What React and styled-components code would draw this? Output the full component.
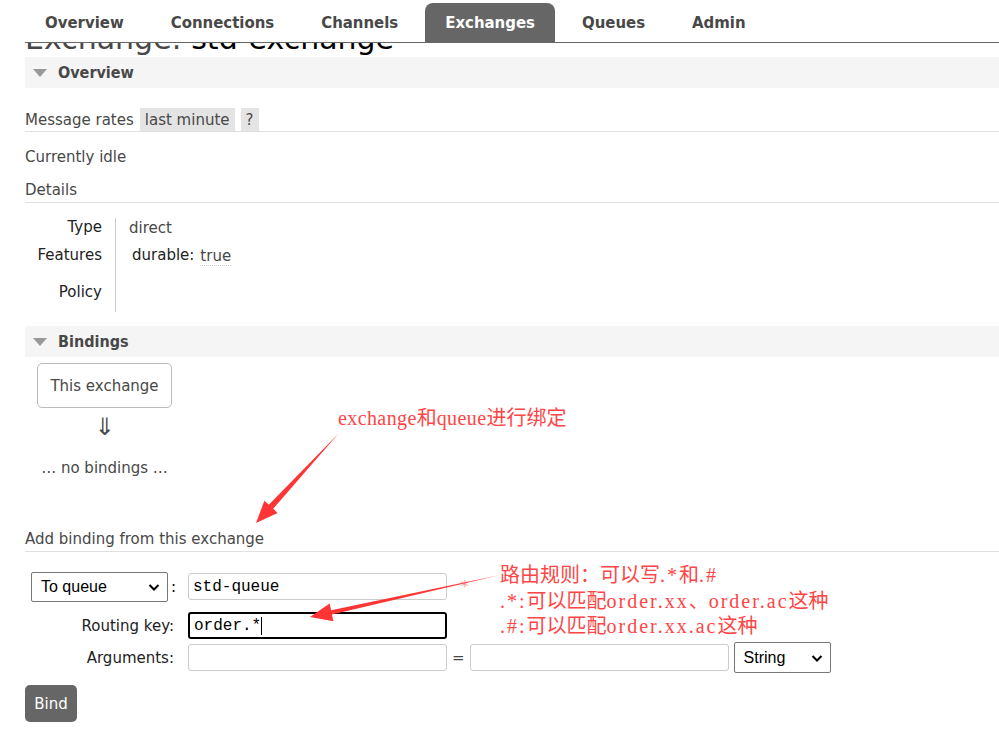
import React from 'react'
import styled, { createGlobalStyle } from 'styled-components'

const TEXT = '#484848'
const RED = '#ff4545'
const SECTION_BG = '#f5f5f5'

const GlobalStyle = createGlobalStyle`
  html, body {
    margin: 0;
    padding: 0;
    background: #fff;
    overflow: hidden;
  }
  body {
    font-family: "DejaVu Sans", Verdana, sans-serif;
    font-size: 15px;
    color: ${TEXT};
  }
`

const Page = styled.div`
  position: relative;
  width: 999px;
  height: 729px;
  overflow: hidden;
`

const Header = styled.header`
  background: #fff;
`

const Tabs = styled.ul`
  list-style: none;
  margin: 0 0 0 25px;
  padding: 3px 0 0;
  height: 39px;
  box-sizing: content-box;
  display: flex;
  gap: 7px;
  border-bottom: 1px solid #666;
`

const Tab = styled.li`
  padding: 0 20px;
  display: flex;
  align-items: center;
  border-radius: 8px 8px 0 0;
  font-family: "DejaVu Sans Condensed", "DejaVu Sans", sans-serif;
  font-weight: bold;
  font-size: 16.6px;
  color: ${(p) => (p.active ? '#fff' : TEXT)};
  background: ${(p) => (p.active ? '#666' : 'transparent')};
`

const Main = styled.main`
  padding-left: 25px;
`

/* the page is scrolled: only the lower part of the title shows below the header */
const TitleClip = styled.div`
  height: 14px;
  overflow: hidden;
`

const Title = styled.h1`
  margin: -23px 0 0;
  font-size: 30px;
  font-weight: normal;
  line-height: 37px;
  color: ${TEXT};
  white-space: nowrap;
  b {
    font-weight: normal;
    color: #000;
  }
`

const SectionHead = styled.h2`
  margin: ${(p) => p.top || 0}px 0 0;
  height: 31px;
  background: ${SECTION_BG};
  display: flex;
  align-items: center;
  gap: 11px;
  padding-left: 8px;
  font-family: "DejaVu Sans Condensed", "DejaVu Sans", sans-serif;
  font-weight: bold;
  font-size: 16px;
  color: ${TEXT};
`

const Triangle = styled.span`
  width: 0;
  height: 0;
  border-left: 7px solid transparent;
  border-right: 7px solid transparent;
  border-top: 8px solid #999;
`

const RatesRow = styled.div`
  margin-top: 20px;
  height: 23px;
  display: flex;
  align-items: center;
  gap: 6px;
  border-bottom: 1px solid #e0e0e0;
`

const Chip = styled.span`
  background: #e4e4e4;
  padding: 0 5px;
  height: 23px;
  line-height: 25px;
`

const Line = styled.div`
  margin-top: ${(p) => p.top}px;
  line-height: 18px;
`

const SubHead = styled.div`
  margin-top: ${(p) => p.top}px;
  padding-bottom: 3px;
  line-height: 18px;
  border-bottom: 1px solid #e0e0e0;
`

const Details = styled.div`
  margin-top: 15px;
  display: grid;
  grid-template-columns: 90px 1fr;
  grid-template-rows: 20px 34px 40px;
`

const Label = styled.div`
  display: flex;
  align-items: center;
  justify-content: flex-end;
  padding-right: 13px;
  color: #222;
  margin-top: ${(p) => p.shift || 0}px;
`

const Value = styled.div`
  display: flex;
  align-items: center;
  padding-left: 13px;
  border-left: 1px solid #ccc;
  gap: 6px;
`

const Key = styled.span`
  color: #222;
  margin-left: 3px;
`

const Dotted = styled.span`
  margin-top: 3px;
  border-bottom: 1px dotted #ccc;
  line-height: 17px;
`

const BindingBox = styled.div`
  margin: 6px 0 0 12px;
  width: 133px;
  height: 43px;
  border: 1px solid #bbb;
  border-radius: 5px;
  display: flex;
  align-items: center;
  justify-content: center;
`

const Centered = styled.div`
  margin-left: 12px;
  width: 135px;
  text-align: center;
  margin-top: ${(p) => p.top}px;
  font-size: ${(p) => p.size || 15}px;
  line-height: ${(p) => p.lh || 18}px;
`

const Form = styled.div`
  margin-top: 18px;
`

const FormRow = styled.div`
  display: flex;
  align-items: center;
  height: 33px;
  margin-top: ${(p) => p.top || 0}px;
`

const FieldLabel = styled.div`
  width: 149px;
  flex: none;
  display: flex;
  align-items: center;
  justify-content: ${(p) => (p.start ? 'flex-start' : 'flex-end')};
  color: #222;
  margin-right: 14px;
`

const Select = styled.div`
  flex: none;
  width: ${(p) => p.w}px;
  height: ${(p) => p.h}px;
  box-sizing: border-box;
  border: 1px solid #767676;
  border-radius: 2px;
  display: flex;
  align-items: center;
  justify-content: space-between;
  padding: 0 6px 0 9px;
  font-family: "Liberation Sans", Arial, sans-serif;
  font-size: 16px;
  color: #000;
  margin-left: ${(p) => p.left || 0}px;
`

const Field = styled.div`
  position: relative;
  flex: none;
`

const Input = styled.input`
  display: block;
  width: 259px;
  height: 27px;
  box-sizing: border-box;
  border: ${(p) => (p.focused ? '2px solid #000' : '1px solid #ccc')};
  border-radius: 3px;
  padding: 0 4px;
  font-family: "Liberation Mono", "Courier New", monospace;
  font-size: 16px;
  color: #000;
  outline: none;
  background: #fff;
`

const Caret = styled.span`
  position: absolute;
  left: 73px;
  top: 5px;
  width: 1px;
  height: 18px;
  background: #000;
`

const Sep = styled.span`
  margin: 0 ${(p) => p.space}px;
  color: ${(p) => p.color || TEXT};
`

const Button = styled.button`
  margin-top: 11px;
  width: 52px;
  height: 37px;
  border: none;
  border-radius: 5px;
  background: #666;
  color: #fff;
  font-family: "DejaVu Sans", sans-serif;
  font-size: 15px;
  padding: 0;
`

const Note = styled.div`
  position: absolute;
  left: ${(p) => p.x}px;
  top: ${(p) => p.y}px;
  color: ${RED};
  font-family: "Noto Sans CJK SC", sans-serif;
  font-size: 20px;
  line-height: 24.5px;
  white-space: nowrap;
  z-index: 3;
`

const Latin = styled.span`
  font-family: "Liberation Serif", "Times New Roman", serif;
  letter-spacing: ${(p) => p.ls ?? 2}px;
`

const Arrows = styled.svg`
  position: absolute;
  left: 0;
  top: 0;
  z-index: 3;
  pointer-events: none;
`

const Chevron = () => (
  <svg width="14" height="14" viewBox="0 0 14 14">
    <path d="M2.5 5 L7 9.5 L11.5 5" fill="none" stroke="#000" strokeWidth="2" />
  </svg>
)

export default function App() {
  const tabs = ['Overview', 'Connections', 'Channels', 'Exchanges', 'Queues', 'Admin']
  return (
    <Page>
      <GlobalStyle />
      <Header>
        <Tabs>
          {tabs.map((t) => (
            <Tab key={t} active={t === 'Exchanges'}>{t}</Tab>
          ))}
        </Tabs>
      </Header>
      <Main>
        <TitleClip>
          <Title>Exchange: <b>std-exchange</b></Title>
        </TitleClip>
        <SectionHead><Triangle />Overview</SectionHead>
        <RatesRow>
          <span>Message rates</span>
          <Chip>last minute</Chip>
          <Chip>?</Chip>
        </RatesRow>
        <Line top={16}>Currently idle</Line>
        <SubHead top={15}>Details</SubHead>
        <Details>
          <Label shift={-2}>Type</Label>
          <Value>direct</Value>
          <Label>Features</Label>
          <Value><Key>durable:</Key><Dotted>true</Dotted></Value>
          <Label>Policy</Label>
          <Value />
        </Details>
        <SectionHead top={14}><Triangle />Bindings</SectionHead>
        <BindingBox>This exchange</BindingBox>
        <Centered top={7} size={24} lh={24}>⇓</Centered>
        <Centered top={20}>… no bindings …</Centered>
        <SubHead top={53}>Add binding from this exchange</SubHead>
        <Form>
          <FormRow>
            <FieldLabel start>
              <Select w={137} h={30} left={6}>To queue<Chevron /></Select>
              <Sep space={3} color="#000">:</Sep>
            </FieldLabel>
            <Field><Input readOnly defaultValue="std-queue" /></Field>
            <Sep space={14} color="#f99">*</Sep>
          </FormRow>
          <FormRow top={6}>
            <FieldLabel>Routing key:</FieldLabel>
            <Field>
              <Input readOnly focused defaultValue="order.*" />
              <Caret />
            </Field>
          </FormRow>
          <FormRow top={-1}>
            <FieldLabel>Arguments:</FieldLabel>
            <Field><Input readOnly /></Field>
            <Sep space={5}>=</Sep>
            <Field><Input readOnly /></Field>
            <Select w={97} h={31} left={5}>String<Chevron /></Select>
          </FormRow>
          <Button>Bind</Button>
        </Form>
      </Main>

      <Note x={338} y={405}>
        <Latin ls={0.4}>exchange</Latin>和<Latin ls={0.4}>queue</Latin>进行绑定
      </Note>
      <Note x={500} y={562}>
        <div>路由规则：可以写<Latin>.*</Latin>和<Latin>.#</Latin></div>
        <div><Latin>.*:</Latin>可以匹配<Latin>order.xx</Latin>、<Latin>order.ac</Latin>这种</div>
        <div><Latin>.#:</Latin>可以匹配<Latin>order.xx.ac</Latin>这种</div>
      </Note>
      <Arrows width="999" height="729" viewBox="0 0 999 729">
        <polygon
          fill="#ff3535"
          points="339,433 273.2,508.8 277.6,512.9 256,523 264.4,500.7 268.8,504.8"
        />
        <polygon
          fill="#ff3535"
          points="500,575 331.9,614.6 333.4,621.2 310,617 329.6,603.6 331.1,610.2"
        />
      </Arrows>
    </Page>
  )
}
